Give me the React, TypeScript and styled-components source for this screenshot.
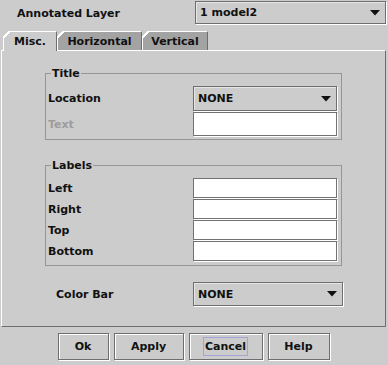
import React from "react";
import styled, { createGlobalStyle } from "styled-components";

const Global = createGlobalStyle`
  html, body { margin: 0; padding: 0; background: #cccccc; }
  * { box-sizing: border-box; }
`;

const Window = styled.div`
  width: 388px;
  height: 365px;
  overflow: hidden;
  background: #cccccc;
  display: flex;
  flex-direction: column;
  font-family: "DejaVu Sans", "Liberation Sans", sans-serif;
  font-weight: bold;
  font-size: 11px;
  color: #111;
`;

const TopRow = styled.div`
  display: flex;
  align-items: flex-start;
  height: 31px;
`;

const TopLabel = styled.div`
  width: 195px;
  height: 24px;
  margin-top: 1px;
  padding-left: 17px;
  display: flex;
  align-items: center;
`;

const Combo = styled.div<{ $w: number; $h: number }>`
  width: ${(p) => p.$w}px;
  height: ${(p) => p.$h}px;
  margin-top: ${(p) => (p.$h === 23 ? 1 : 0)}px;
  display: flex;
  align-items: center;
  justify-content: space-between;
  padding: 0 5px 0 4px;
  background: #cccccc;
  border: 1px solid #6e6e6e;
  box-shadow: 1px 1px 0 #ffffff, inset 1px 1px 0 #e6e6e6;
`;

const Arrow = () => (
  <svg width="10" height="6" viewBox="0 0 10 6">
    <polygon points="0,0 10,0 5,5.5" fill="#111" />
  </svg>
);

const Tabs = styled.div`
  display: flex;
  align-items: flex-end;
  height: 19px;
  padding-left: 3px;
`;

const Tab = styled.div<{ $w: number; $active?: boolean }>`
  position: relative;
  z-index: ${(p) => (p.$active ? 2 : 1)};
  width: ${(p) => p.$w}px;
  height: ${(p) => (p.$active ? 20 : 19)}px;
  margin-bottom: ${(p) => (p.$active ? -1 : 0)}px;
  background: ${(p) => (p.$active ? "#cccccc" : "#a3a3a3")};
  border-top: 1px solid #ffffff;
  border-left: 1px solid #ffffff;
  border-right: 1px solid #6e6e6e;
  display: flex;
  align-items: center;
  justify-content: center;
  padding-bottom: ${(p) => (p.$active ? 1 : 0)}px;
  &::before {
    content: "";
    position: absolute;
    top: -1px;
    left: -1px;
    width: 7px;
    height: 7px;
    background: linear-gradient(
      135deg,
      #cccccc 0 42%,
      #ffffff 42% 58%,
      transparent 58%
    );
  }
`;

const Panel = styled.div`
  position: relative;
  z-index: 1;
  margin-left: 1px;
  width: 385px;
  height: 277px;
  border-top: 1px solid #ffffff;
  border-left: 1px solid #ffffff;
  border-right: 1px solid #6e6e6e;
  border-bottom: 1px solid #6e6e6e;
  padding: 22px 0 0 43px;
  display: flex;
  flex-direction: column;
`;

const Group = styled.div<{ $gapTop?: number; $padBottom: number }>`
  position: relative;
  width: 297px;
  margin-top: ${(p) => p.$gapTop ?? 0}px;
  border: 1px solid #969696;
  padding: 12px 4px ${(p) => p.$padBottom}px 2px;
  display: grid;
  grid-template-columns: 1fr 144px;
  row-gap: 1px;
  align-items: center;
`;

const Legend = styled.div`
  position: absolute;
  top: -7px;
  left: 5px;
  padding: 0 1px;
  line-height: 13px;
  background: #cccccc;
`;

const Label = styled.div<{ $disabled?: boolean }>`
  color: ${(p) => (p.$disabled ? "#9c9c9c" : "#111")};
`;

const Field = styled.input<{ $h: number }>`
  display: block;
  width: 144px;
  height: ${(p) => p.$h}px;
  margin: 0;
  padding: 0 3px;
  background: #ffffff;
  border: 1px solid #727272;
  box-shadow: 1px 1px 0 #ffffff;
  outline: none;
  font: inherit;
`;

const BarRow = styled.div`
  margin-top: 16px;
  display: grid;
  grid-template-columns: 148px 150px;
  align-items: center;
`;

const BarLabel = styled.div`
  padding-left: 11px;
`;

const Buttons = styled.div`
  display: flex;
  justify-content: center;
  gap: 5px;
  padding-top: 6px;
  padding-right: 1px;
`;

const Button = styled.div<{ $w: number }>`
  width: ${(p) => p.$w}px;
  height: 27px;
  display: flex;
  align-items: center;
  justify-content: center;
  background: #cccccc;
  border: 1px solid #6e6e6e;
  box-shadow: inset 1px 1px 0 #ffffff, 1px 1px 0 #ffffff;
`;

const Focus = styled.span`
  border: 1px solid #a3a3d6;
  padding: 2px 1px;
  line-height: 13px;
`;

export default function App() {
  return (
    <>
      <Global />
      <Window>
        <TopRow>
          <TopLabel>Annotated Layer</TopLabel>
          <Combo $w={191} $h={23}>
            <span>1 model2</span>
            <Arrow />
          </Combo>
        </TopRow>
        <Tabs>
          <Tab $w={54} $active>Misc.</Tab>
          <Tab $w={85}>Horizontal</Tab>
          <Tab $w={66}>Vertical</Tab>
        </Tabs>
        <Panel>
          <Group $padBottom={3}>
            <Legend>Title</Legend>
            <Label>Location</Label>
            <Combo $w={144} $h={25}>
              <span>NONE</span>
              <Arrow />
            </Combo>
            <Label $disabled>Text</Label>
            <Field $h={24} readOnly value="" />
          </Group>
          <Group $gapTop={25} $padBottom={4}>
            <Legend>Labels</Legend>
            <Label>Left</Label>
            <Field $h={20} readOnly value="" />
            <Label>Right</Label>
            <Field $h={20} readOnly value="" />
            <Label>Top</Label>
            <Field $h={20} readOnly value="" />
            <Label>Bottom</Label>
            <Field $h={20} readOnly value="" />
          </Group>
          <BarRow>
            <BarLabel>Color Bar</BarLabel>
            <Combo $w={150} $h={24}>
              <span>NONE</span>
              <Arrow />
            </Combo>
          </BarRow>
        </Panel>
        <Buttons>
          <Button $w={51}>Ok</Button>
          <Button $w={70}>Apply</Button>
          <Button $w={74}>
            <Focus>Cancel</Focus>
          </Button>
          <Button $w={62}>Help</Button>
        </Buttons>
      </Window>
    </>
  );
}
